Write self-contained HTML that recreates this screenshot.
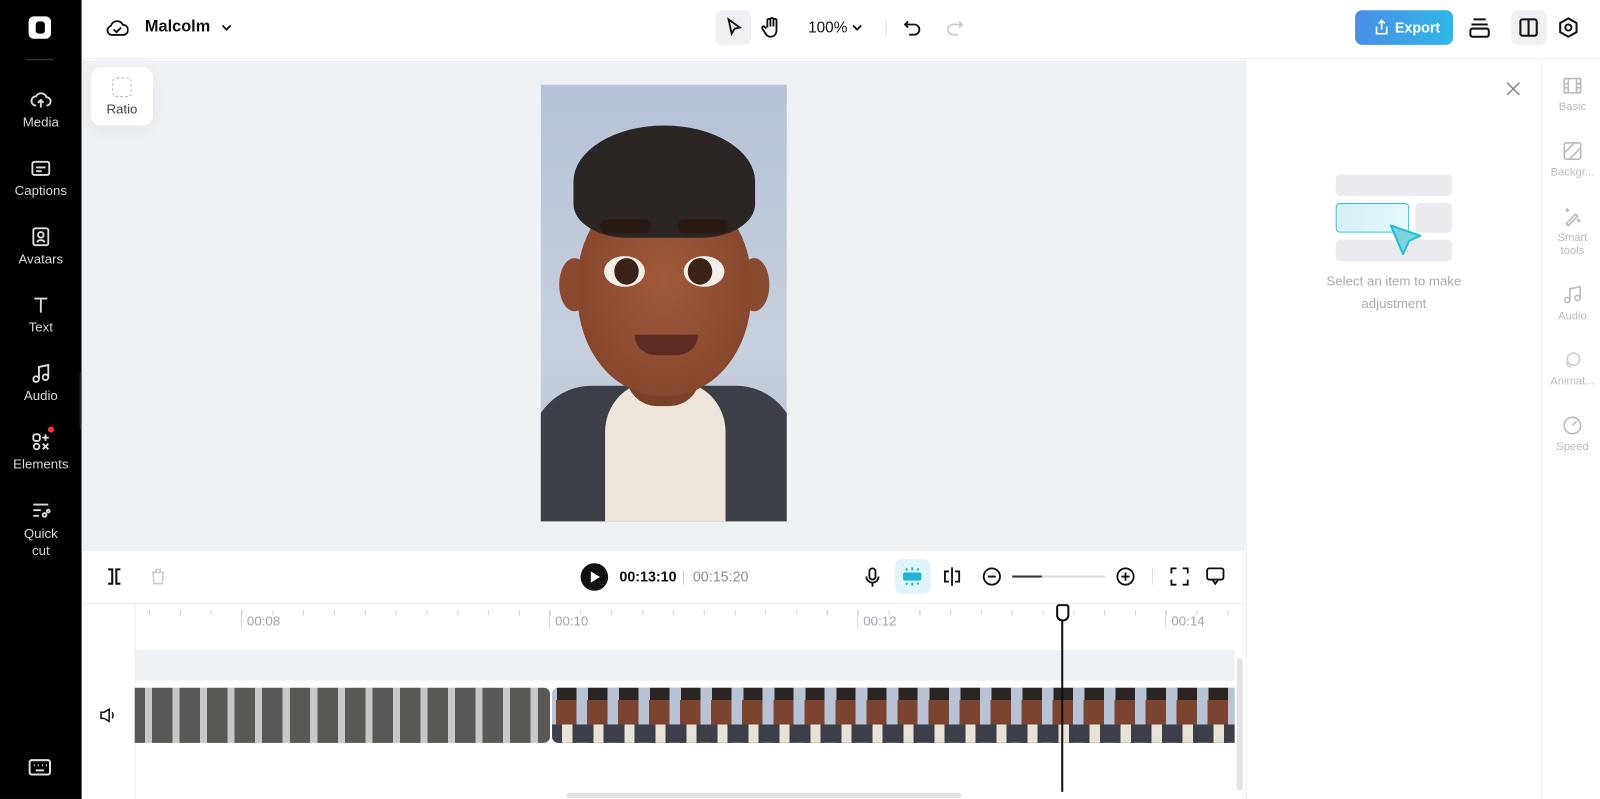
<!DOCTYPE html>
<html><head><meta charset="utf-8"><style>
*{box-sizing:border-box;margin:0;padding:0}
html,body{width:1600px;height:799px;overflow:hidden}
body{font-family:"Liberation Sans",sans-serif;background:#fff;position:relative}
#w{position:absolute;left:0;top:0;width:1568px;height:783px;transform:scale(1.0204);transform-origin:0 0}
.abs{position:absolute}
.side{left:0;top:0;width:80px;height:783px;background:#000}
.si{position:absolute;left:0;width:80px;text-align:center;color:#d8d8d8;font-size:13px}
.si svg{display:block;margin:0 auto 3px}
.top{left:80px;top:0;width:1488px;height:58px;background:#fff;border-bottom:1px solid #eceef0}
.rt{position:absolute;left:1510px;width:62px;text-align:center;color:#b8bcc2;font-size:11px;line-height:13px}
.rt svg{display:block;margin:0 auto 5px}
.tl{position:absolute;top:601px;font-size:13px;color:#a0a5ad}
</style></head><body><div id="w">
<div class="abs side"></div>
<div class="abs" style="left:28px;top:16px;width:22px;height:22px;background:#fff;border-radius:5px"><div style="position:absolute;left:7px;top:5px;width:9px;height:12px;background:#000;border-radius:3px"></div></div>
<div class="abs" style="left:26px;top:58px;width:26px;height:1px;background:#444"></div>
<div class="si" style="top:87px"><svg width="22" height="22" viewBox="0 0 24 24" fill="none" stroke="#ddd" stroke-width="2"><path d="M7 18a5 5 0 010-10 6 6 0 0111 1 4 4 0 010 9M12 20v-8m-3 3l3-3 3 3"/></svg>Media</div>
<div class="si" style="top:154px"><svg width="22" height="22" viewBox="0 0 24 24" fill="none" stroke="#ddd" stroke-width="2"><rect x="3" y="5" width="18" height="14" rx="2"/><path d="M7 11h10M7 15h6"/></svg>Captions</div>
<div class="si" style="top:221px"><svg width="22" height="22" viewBox="0 0 24 24" fill="none" stroke="#ddd" stroke-width="2"><rect x="4" y="3" width="16" height="18" rx="2"/><circle cx="12" cy="10" r="3"/><path d="M8 18c1-3 7-3 8 0"/></svg>Avatars</div>
<div class="si" style="top:288px"><svg width="22" height="22" viewBox="0 0 24 24" fill="none" stroke="#ddd" stroke-width="2"><path d="M5 5h14M12 5v15"/></svg>Text</div>
<div class="si" style="top:355px"><svg width="22" height="22" viewBox="0 0 24 24" fill="none" stroke="#ddd" stroke-width="2"><circle cx="7" cy="18" r="3"/><circle cx="17" cy="16" r="3"/><path d="M10 18V5l10-2v13"/></svg>Audio</div>
<div class="si" style="top:422px"><svg width="22" height="22" viewBox="0 0 24 24" fill="none" stroke="#ddd" stroke-width="2"><rect x="4" y="4" width="7" height="7" rx="2"/><circle cx="7.5" cy="17" r="3"/><path d="M17 4v7M13.5 7.5h7M14 14l6 6M20 14l-6 6"/></svg>Elements</div>
<div class="abs" style="left:47px;top:418px;width:6px;height:6px;border-radius:3px;background:#f33"></div>
<div class="si" style="top:489px;line-height:17px"><svg width="22" height="22" viewBox="0 0 24 24" fill="none" stroke="#ddd" stroke-width="2"><path d="M4 6h16M4 12h8M4 18h6"/><circle cx="16" cy="17" r="2"/><circle cx="20" cy="13" r="1.5"/></svg>Quick<br>cut</div>
<svg class="abs" style="left:28px;top:743px" width="22" height="18" viewBox="0 0 22 18" fill="none" stroke="#ddd" stroke-width="2"><rect x="1" y="2" width="20" height="14" rx="2"/><path d="M5 7h1M9 7h1M13 7h1M17 7h1M7 12h8"/></svg>
<div class="abs" style="left:78px;top:365px;width:9px;height:56px;background:#222;border-radius:0 6px 6px 0"></div>

<div class="abs top"></div>
<svg class="abs" style="left:104px;top:17px" width="22" height="20" viewBox="0 0 24 22" fill="none" stroke="#111" stroke-width="2"><path d="M6 19a5 5 0 01-1-9.8A7 7 0 0118 8a5 5 0 010 11z"/><path d="M8 13l3 3 5-5"/></svg>
<div class="abs" style="left:142px;top:18px;font-size:16px;font-weight:bold;color:#111">Malcolm</div>
<svg class="abs" style="left:215px;top:20px" width="14" height="14" viewBox="0 0 14 14" fill="none" stroke="#111" stroke-width="1.8"><path d="M3 5l4 4 4-4"/></svg>
<div class="abs" style="left:701px;top:10px;width:35px;height:34px;background:#eef0f3;border-radius:7px"></div>
<svg class="abs" style="left:709px;top:17px" width="20" height="20" viewBox="0 0 20 20" fill="none" stroke="#111" stroke-width="1.8"><path d="M5 2l11 8-5 1-3 5z"/></svg>
<svg class="abs" style="left:746px;top:16px" width="20" height="22" viewBox="0 0 20 22" fill="none" stroke="#111" stroke-width="1.8"><path d="M6 11V4a1.5 1.5 0 013 0v6V3a1.5 1.5 0 013 0v7V4a1.5 1.5 0 013 0v9c0 4-2 7-6 7-3 0-4-2-6-5l-2-3a1.5 1.5 0 012-2l2 2"/></svg>
<div class="abs" style="left:792px;top:19px;font-size:15px;color:#111">100%</div>
<svg class="abs" style="left:833px;top:20px" width="14" height="14" viewBox="0 0 14 14" fill="none" stroke="#111" stroke-width="1.8"><path d="M3 5l4 4 4-4"/></svg>
<div class="abs" style="left:868px;top:18px;width:1px;height:18px;background:#ddd"></div>
<svg class="abs" style="left:885px;top:18px" width="18" height="18" viewBox="0 0 18 18" fill="none" stroke="#111" stroke-width="1.8"><path d="M5 3L2 6l3 3M2 6h9a5 5 0 010 10H6"/></svg>
<svg class="abs" style="left:927px;top:18px" width="18" height="18" viewBox="0 0 18 18" fill="none" stroke="#ccc" stroke-width="1.8"><path d="M13 3l3 3-3 3M16 6H7a5 5 0 000 10h5"/></svg>
<div class="abs" style="left:1328px;top:10px;width:96px;height:34px;border-radius:7px;background:linear-gradient(90deg,#4a8ee6,#2fb7e6);color:#fff;font-size:14px;font-weight:bold;padding:9px 0 0 39px">Export</div>
<svg class="abs" style="left:1346px;top:18px" width="16" height="17" viewBox="0 0 16 17" fill="none" stroke="#fff" stroke-width="1.6"><path d="M8 11V2M5 5l3-3 3 3M3 8v7h10V8"/></svg>
<svg class="abs" style="left:1439px;top:16px" width="22" height="22" viewBox="0 0 22 22" fill="none" stroke="#111" stroke-width="2"><path d="M5 3h12M3 8h16"/><rect x="2" y="12" width="18" height="8" rx="2"/></svg>
<div class="abs" style="left:1481px;top:10px;width:35px;height:34px;background:#eef0f3;border-radius:7px"></div>
<svg class="abs" style="left:1488px;top:17px" width="20" height="20" viewBox="0 0 20 20" fill="none" stroke="#111" stroke-width="2"><rect x="2" y="2" width="16" height="16" rx="2"/><path d="M10 2v16"/></svg>
<svg class="abs" style="left:1526px;top:16px" width="22" height="22" viewBox="0 0 22 22" fill="none" stroke="#111" stroke-width="2"><path d="M11 2l8 4.5v9L11 20l-8-4.5v-9z"/><circle cx="11" cy="11" r="3"/></svg>

<div class="abs" style="left:80px;top:59px;width:1141px;height:481px;background:#eff2f5"></div>
<div class="abs" style="left:89px;top:66px;width:61px;height:57px;background:#fff;border-radius:10px;box-shadow:0 4px 14px rgba(0,0,0,.05);text-align:center;font-size:13px;color:#444;padding-top:33px">Ratio</div>
<div class="abs" style="left:110px;top:76px;width:19px;height:19px;border:1.5px dashed #bbb;border-radius:4px"></div>

<div class="abs" style="left:530px;top:83px;width:241px;height:428px;background:linear-gradient(180deg,#b6c2d7,#c7d0de 60%,#b5bfcf);overflow:hidden">
 <div class="abs" style="left:-10px;top:295px;width:261px;height:160px;background:#3c3f48;border-radius:60px 60px 0 0"></div>
 <div class="abs" style="left:63px;top:290px;width:118px;height:140px;background:#eee6da;border-radius:50px 50px 0 0"></div>
 <div class="abs" style="left:84px;top:245px;width:72px;height:70px;background:#7a412b;border-radius:0 0 30px 30px"></div>
 <div class="abs" style="left:18px;top:170px;width:30px;height:52px;background:#8a4a30;border-radius:50%"></div>
 <div class="abs" style="left:194px;top:170px;width:30px;height:52px;background:#8a4a30;border-radius:50%"></div>
 <div class="abs" style="left:36px;top:100px;width:170px;height:205px;background:radial-gradient(ellipse at 50% 45%,#a0593a,#7d4028);border-radius:45% 45% 48% 48%"></div>
 <div class="abs" style="left:32px;top:40px;width:178px;height:110px;background:#2b2524;border-radius:50% 50% 30% 30%"></div>
 <div class="abs" style="left:58px;top:132px;width:50px;height:14px;background:#2a1a14;border-radius:8px"></div>
 <div class="abs" style="left:134px;top:132px;width:50px;height:14px;background:#2a1a14;border-radius:8px"></div>
 <div class="abs" style="left:62px;top:168px;width:40px;height:30px;background:#f4efe9;border-radius:50%"></div>
 <div class="abs" style="left:140px;top:168px;width:40px;height:30px;background:#f4efe9;border-radius:50%"></div>
 <div class="abs" style="left:72px;top:170px;width:24px;height:26px;background:#3a2216;border-radius:50%"></div>
 <div class="abs" style="left:144px;top:170px;width:24px;height:26px;background:#3a2216;border-radius:50%"></div>
 <div class="abs" style="left:92px;top:245px;width:62px;height:20px;background:#5e2a22;border-radius:0 0 30px 30px"></div>
</div>

<div class="abs" style="left:1221px;top:59px;width:1px;height:724px;background:#f0f1f3"></div>
<svg class="abs" style="left:1475px;top:79px" width="16" height="16" viewBox="0 0 16 16" stroke="#888" stroke-width="1.5"><path d="M2 2l12 12M14 2L2 14"/></svg>
<div class="abs" style="left:1309px;top:171px;width:114px;height:21px;background:#e9ebee;border-radius:4px"></div>
<div class="abs" style="left:1387px;top:199px;width:36px;height:29px;background:#e9ebee;border-radius:4px"></div>
<div class="abs" style="left:1309px;top:235px;width:114px;height:21px;background:#e9ebee;border-radius:4px"></div>
<div class="abs" style="left:1309px;top:199px;width:72px;height:29px;background:linear-gradient(90deg,#d6f1f7,#e6f8fb);border:1.5px solid #35c6dc;border-radius:4px"></div>
<svg class="abs" style="left:1360px;top:218px" width="36" height="34" viewBox="0 0 36 34"><path d="M3 3l29 10-11 5-6 13z" fill="#7fd3df" stroke="#1fc0d8" stroke-width="2" stroke-linejoin="round"/></svg>
<div class="abs" style="left:1280px;top:265px;width:172px;text-align:center;font-size:13px;line-height:22px;color:#a6abb3">Select an item to make<br>adjustment</div>

<div class="abs" style="left:1510px;top:59px;width:1px;height:724px;background:#eef0f2"></div>
<div class="rt" style="top:74px"><svg width="20" height="20" viewBox="0 0 20 20" fill="none" stroke="#bbb" stroke-width="1.6"><rect x="2" y="3" width="16" height="14" rx="1"/><path d="M6 3v14M14 3v14M2 8h4M2 12h4M14 8h4M14 12h4"/></svg>Basic</div>
<div class="rt" style="top:138px"><svg width="20" height="20" viewBox="0 0 20 20" fill="none" stroke="#bbb" stroke-width="1.6"><rect x="2" y="2" width="16" height="16" rx="2"/><path d="M2 12l10-10M7 18L18 7"/></svg>Backgr...</div>
<div class="rt" style="top:202px"><svg width="20" height="20" viewBox="0 0 20 20" fill="none" stroke="#bbb" stroke-width="1.6"><path d="M4 17l9-9 2 2-9 9zM5 2v4M3 4h4M16 12v4M14 14h4"/></svg>Smart<br>tools</div>
<div class="rt" style="top:279px"><svg width="20" height="20" viewBox="0 0 20 20" fill="none" stroke="#bbb" stroke-width="1.6"><circle cx="5" cy="15" r="2.5"/><circle cx="15" cy="13" r="2.5"/><path d="M7.5 15V4l10-2v11"/></svg>Audio</div>
<div class="rt" style="top:343px"><svg width="20" height="20" viewBox="0 0 20 20" fill="none" stroke="#ccc" stroke-width="1.6"><circle cx="11" cy="9" r="6"/><path d="M4 12a6 6 0 005 5"/></svg>Animat...</div>
<div class="rt" style="top:407px"><svg width="20" height="20" viewBox="0 0 20 20" fill="none" stroke="#bbb" stroke-width="1.6"><circle cx="10" cy="10" r="8"/><path d="M10 10l4-4"/></svg>Speed</div>

<div class="abs" style="left:80px;top:591px;width:1141px;height:1px;background:#eceef0"></div>
<svg class="abs" style="left:104px;top:556px" width="16" height="18" viewBox="0 0 16 18" fill="none" stroke="#111" stroke-width="2"><path d="M2 2h4v14H2M14 2h-4v14h4"/></svg>
<svg class="abs" style="left:147px;top:556px" width="16" height="18" viewBox="0 0 16 18" fill="none" stroke="#ccc" stroke-width="1.6"><path d="M2 5h12M6 5V2h4v3M3 5l1 11h8l1-11"/></svg>
<div class="abs" style="left:569px;top:552px;width:27px;height:27px;border-radius:50%;background:#111"></div>
<svg class="abs" style="left:578px;top:560px" width="10" height="11"><path d="M1 0l9 5.5L1 11z" fill="#fff"/></svg>
<div class="abs" style="left:607px;top:557px;font-size:14px;font-weight:bold;color:#111">00:13:10</div>
<div class="abs" style="left:668px;top:557px;font-size:14px;color:#ccc">|</div>
<div class="abs" style="left:679px;top:557px;font-size:14px;color:#8a9099">00:15:20</div>
<svg class="abs" style="left:846px;top:555px" width="18" height="22" viewBox="0 0 18 22" fill="none" stroke="#111" stroke-width="1.8"><rect x="6" y="2" width="6" height="11" rx="3"/><path d="M3 10a6 6 0 0012 0M9 16v4"/></svg>
<div class="abs" style="left:877px;top:548px;width:35px;height:34px;background:#dff5fa;border-radius:7px"></div>
<svg class="abs" style="left:884px;top:556px" width="20" height="18" viewBox="0 0 20 18" fill="none" stroke="#1fb5d3" stroke-width="2"><rect x="2" y="6" width="16" height="6" rx="1" fill="#1fb5d3"/><path d="M10 0v3M10 15v3M4 1l1 2M16 1l-1 2M4 17l1-2M16 17l-1-2"/></svg>
<svg class="abs" style="left:923px;top:555px" width="20" height="20" viewBox="0 0 20 20" fill="none" stroke="#111" stroke-width="1.8"><path d="M10 1v18M7 5H3v10h4M13 5h4v10h-4"/></svg>
<svg class="abs" style="left:962px;top:555px" width="20" height="20" viewBox="0 0 20 20" fill="none" stroke="#111" stroke-width="1.8"><circle cx="10" cy="10" r="8"/><path d="M6 10h8"/></svg>
<div class="abs" style="left:992px;top:564px;width:91px;height:2px;background:#d5d8dc"></div>
<div class="abs" style="left:992px;top:564px;width:29px;height:2px;background:#333"></div>
<svg class="abs" style="left:1093px;top:555px" width="20" height="20" viewBox="0 0 20 20" fill="none" stroke="#111" stroke-width="1.8"><circle cx="10" cy="10" r="8"/><path d="M6 10h8M10 6v8"/></svg>
<div class="abs" style="left:1129px;top:557px;width:1px;height:16px;background:#ddd"></div>
<svg class="abs" style="left:1146px;top:555px" width="20" height="20" viewBox="0 0 20 20" fill="none" stroke="#111" stroke-width="1.8"><path d="M2 7V2h5M13 2h5v5M18 13v5h-5M7 18H2v-5"/></svg>
<svg class="abs" style="left:1181px;top:555px" width="20" height="20" viewBox="0 0 20 20" fill="none" stroke="#111" stroke-width="1.8"><rect x="2" y="2" width="16" height="11" rx="2"/><path d="M7 13l3 4 3-4"/></svg>

<div class="abs" style="left:132px;top:592px;width:1px;height:191px;background:#eceef0"></div>
<div class="abs" style="left:132px;top:598px;width:1080px;height:5px;background:repeating-linear-gradient(90deg,#d0d0d0 0 1px,transparent 1px 30.2px);background-position:14px 0"></div>
<div class="abs" style="left:236px;top:598px;width:1px;height:17px;background:#d5d5d5"></div>
<div class="abs" style="left:538px;top:598px;width:1px;height:17px;background:#d5d5d5"></div>
<div class="abs" style="left:840px;top:598px;width:1px;height:17px;background:#d5d5d5"></div>
<div class="abs" style="left:1142px;top:598px;width:1px;height:17px;background:#d5d5d5"></div>
<div class="tl" style="left:242px">00:08</div>
<div class="tl" style="left:544px">00:10</div>
<div class="tl" style="left:846px">00:12</div>
<div class="tl" style="left:1148px">00:14</div>
<div class="abs" style="left:132px;top:637px;width:1078px;height:30px;background:#eef1f4"></div>
<svg class="abs" style="left:97px;top:693px" width="18" height="16" viewBox="0 0 18 16" fill="none" stroke="#111" stroke-width="1.5"><path d="M2 5h3l5-3v12l-5-3H2zM13 5c1 1.5 1 4.5 0 6"/></svg>
<div class="abs" style="left:132px;top:674px;width:407px;height:54px;border-radius:0 6px 6px 0;background:repeating-linear-gradient(90deg,#5a5855 0 10px,#c8c8c8 10px 17px,#5a5855 17px 27px)"></div>
<div class="abs" style="left:541px;top:674px;width:669px;height:54px;border-radius:6px 0 0 6px;overflow:hidden;background:repeating-linear-gradient(90deg,#b8c3d6 0 4px,#7a4430 4px 24px,#b8c3d6 24px 30.4px)">
 <div class="abs" style="left:0;top:0;width:669px;height:12px;background:repeating-linear-gradient(90deg,#b8c3d6 0 5px,#2a2422 5px 24px,#b8c3d6 24px 30.4px)"></div>
 <div class="abs" style="left:0;top:36px;width:669px;height:18px;background:repeating-linear-gradient(90deg,#3c3f4a 0 10px,#e9e2d6 10px 20px,#3c3f4a 20px 30.4px)"></div>
</div>
<div class="abs" style="left:1040px;top:600px;width:2px;height:176px;background:#111"></div>
<div class="abs" style="left:1035px;top:592px;width:13px;height:17px;background:#fff;border:2px solid #111;border-radius:3px 3px 6px 6px"></div>
<div class="abs" style="left:1212px;top:645px;width:6px;height:130px;background:#e2e4e7;border-radius:3px"></div>
<div class="abs" style="left:555px;top:777px;width:387px;height:5px;background:#dfe1e4;border-radius:3px"></div>
</div></body></html>
